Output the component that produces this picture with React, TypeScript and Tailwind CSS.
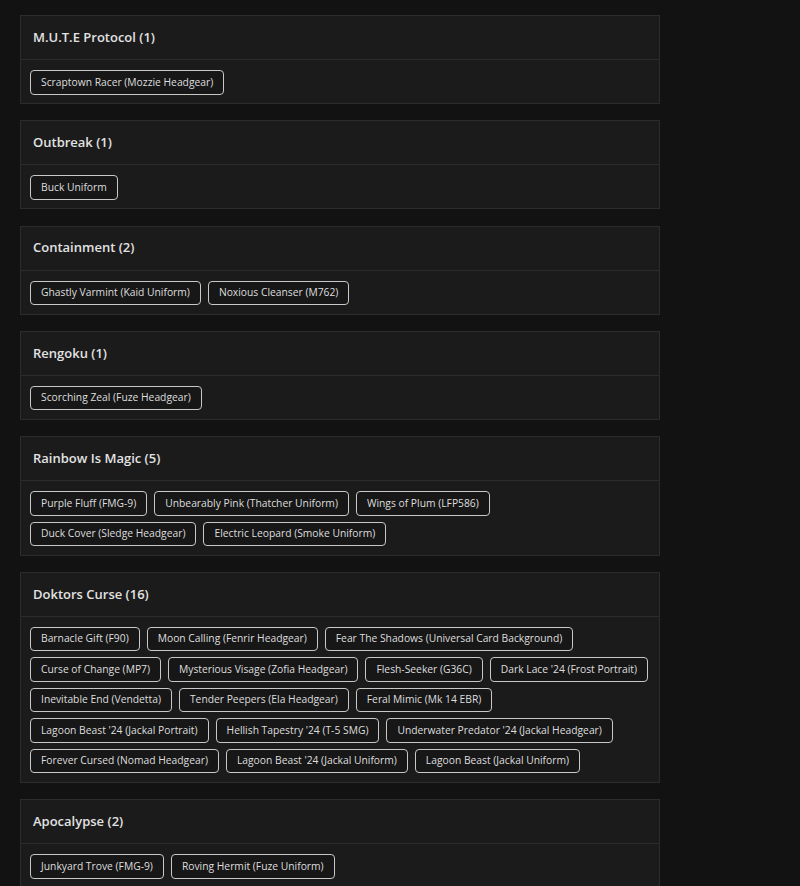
import React from "react";

type Group = { name: string; items: string[] };

const groups: Group[] = [
  { name: "M.U.T.E Protocol", items: ["Scraptown Racer (Mozzie Headgear)"] },
  { name: "Outbreak", items: ["Buck Uniform"] },
  { name: "Containment", items: ["Ghastly Varmint (Kaid Uniform)", "Noxious Cleanser (M762)"] },
  { name: "Rengoku", items: ["Scorching Zeal (Fuze Headgear)"] },
  {
    name: "Rainbow Is Magic",
    items: [
      "Purple Fluff (FMG-9)",
      "Unbearably Pink (Thatcher Uniform)",
      "Wings of Plum (LFP586)",
      "Duck Cover (Sledge Headgear)",
      "Electric Leopard (Smoke Uniform)",
    ],
  },
  {
    name: "Doktors Curse",
    items: [
      "Barnacle Gift (F90)",
      "Moon Calling (Fenrir Headgear)",
      "Fear The Shadows (Universal Card Background)",
      "Curse of Change (MP7)",
      "Mysterious Visage (Zofia Headgear)",
      "Flesh-Seeker (G36C)",
      "Dark Lace '24 (Frost Portrait)",
      "Inevitable End (Vendetta)",
      "Tender Peepers (Ela Headgear)",
      "Feral Mimic (Mk 14 EBR)",
      "Lagoon Beast '24 (Jackal Portrait)",
      "Hellish Tapestry '24 (T-5 SMG)",
      "Underwater Predator '24 (Jackal Headgear)",
      "Forever Cursed (Nomad Headgear)",
      "Lagoon Beast '24 (Jackal Uniform)",
      "Lagoon Beast (Jackal Uniform)",
    ],
  },
  { name: "Apocalypse", items: ["Junkyard Trove (FMG-9)", "Roving Hermit (Fuze Uniform)"] },
];

const App = () => {
  return (
    <div className="min-h-[886px] w-full bg-[#121212] px-5 pt-[15px] font-['Open_Sans',sans-serif]">
      <div className="flex w-[640px] flex-col gap-[16.25px]">
        {groups.map((g) => (
          <div key={g.name} className="border border-[#2c2c2c] bg-[#1b1b1b]">
            <div className="flex h-[44px] items-center border-b border-[#2c2c2c] px-3">
              <h2 className="text-[13px] font-semibold text-[#e2e2e2]">
                {g.name} ({g.items.length})
              </h2>
            </div>
            <div className="flex flex-wrap gap-x-[7px] gap-y-[6px] px-[9px] pt-[10px] pb-[8.5px]">
              {g.items.map((item) => (
                <span
                  key={item}
                  className="flex h-[24.5px] items-center rounded-[4px] border border-[#c8c8c8] bg-[#171717] px-[10px] text-[10.3px] text-[#dedede]"
                >
                  {item}
                </span>
              ))}
            </div>
          </div>
        ))}
      </div>
    </div>
  );
};

export default App;
